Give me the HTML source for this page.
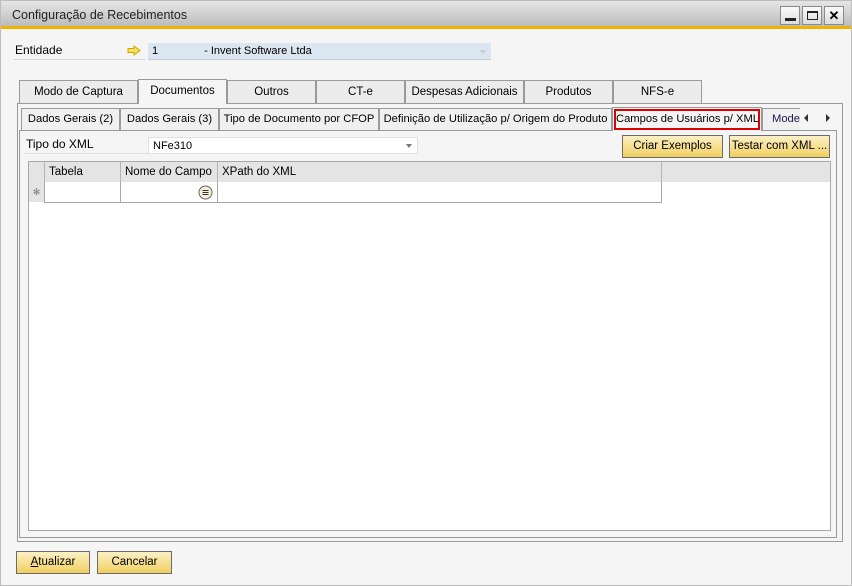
<!DOCTYPE html>
<html><head><meta charset="utf-8"><style>
*{box-sizing:border-box;margin:0;padding:0}
body{width:852px;height:586px;background:#fff;font-family:"Liberation Sans",sans-serif;font-size:12px;color:#000;position:relative;overflow:hidden;white-space:nowrap}
.a{position:absolute}
.win{left:0;top:0;width:852px;height:586px;border:1px solid #bdbdbd;background:#f5f5f5}
.title{left:1px;top:1px;width:850px;height:28px;background:linear-gradient(#e6e6e6,#bcbcbc);border-bottom:3px solid #f0b400}
.wb{top:6px;width:20px;height:19px;border:1px solid #8a8a8a;background:linear-gradient(#fafafa,#dcdcdc)}
.tab{height:23px;border:1px solid #9a9a9a;border-bottom:none;background:#ececec;text-align:center;line-height:22px;font-size:11.5px;overflow:hidden}
.itab{height:22px;border:1px solid #9a9a9a;border-bottom:none;background:#f0f0f0;text-align:center;line-height:21px;font-size:11.2px;overflow:hidden}
.btn{height:23px;border:1px solid #6b6b6b;background:linear-gradient(#fcf1c6,#f1cf60);text-align:center;line-height:21px;font-size:11.5px;overflow:hidden}
.hd{top:162px;height:20px;line-height:20px;padding-left:5px;border-right:1px solid #b5b5b5;font-size:11.5px}
</style></head><body>
<div class="a win"></div>
<div class="a title"></div>
<div class="a" style="left:12px;top:8px;font-size:12.5px;color:#222">Configuração de Recebimentos</div>
<div class="a wb" style="left:780px"><div class="a" style="left:4px;top:11px;width:11px;height:3px;background:#222"></div></div>
<div class="a wb" style="left:802px"><div class="a" style="left:4px;top:4px;width:11px;height:9px;border:1px solid #222;border-top-width:2px"></div></div>
<div class="a wb" style="left:824px;font-weight:bold;font-size:13px;text-align:center;line-height:17px">✕</div>

<div class="a" style="left:15px;top:43px;font-size:12px">Entidade</div>
<div class="a" style="left:13px;top:59px;width:132px;height:1px;background:#d8d8d8"></div>
<svg class="a" style="left:127px;top:45px" width="14" height="11"><path d="M1 3.5h6V1l6 4.5-6 4.5V7.5H1z" fill="#f5e35a" stroke="#c9a800"/></svg>
<div class="a" style="left:148px;top:43px;width:343px;height:17px;background:#dce6f1;border-bottom:1px solid #c4cfdb;font-size:11px;line-height:17px;padding-left:4px">1<span style="margin-left:46px">- Invent Software Ltda</span></div>
<div class="a" style="left:479px;top:50px;border:4px solid transparent;border-top:4px solid #c8d0d8"></div>

<div class="a" style="left:17px;top:103px;width:826px;height:439px;border:1px solid #9a9a9a;background:#f5f5f5"></div>
<div class="a tab" style="left:19px;top:80px;width:119px">Modo de Captura</div>
<div class="a tab" style="left:138px;top:79px;width:89px;height:25px;background:#f5f5f5;z-index:2">Documentos</div>
<div class="a tab" style="left:227px;top:80px;width:89px">Outros</div>
<div class="a tab" style="left:316px;top:80px;width:89px">CT-e</div>
<div class="a tab" style="left:405px;top:80px;width:119px">Despesas Adicionais</div>
<div class="a tab" style="left:524px;top:80px;width:89px">Produtos</div>
<div class="a tab" style="left:613px;top:80px;width:89px">NFS-e</div>

<div class="a" style="left:19px;top:130px;width:818px;height:408px;border:1px solid #9a9a9a;background:#f5f5f5"></div>
<div class="a itab" style="left:21px;top:108px;width:99px">Dados Gerais (2)</div>
<div class="a itab" style="left:120px;top:108px;width:99px">Dados Gerais (3)</div>
<div class="a itab" style="left:219px;top:108px;width:160px">Tipo de Documento por CFOP</div>
<div class="a itab" style="left:379px;top:108px;width:233px">Definição de Utilização p/ Origem do Produto</div>
<div class="a itab" style="left:612px;top:107px;width:150px;height:24px;background:#f5f5f5;z-index:2"><div style="margin:1px 1px 0;border:2px solid #e00000;height:21px;line-height:17px">Campos de Usuários p/ XML</div></div>
<div class="a itab" style="left:762px;top:108px;width:38px;border-right:none;text-align:left;padding-left:9px;overflow:hidden;color:#1a1a50">Model</div>
<div class="a" style="left:804px;top:114px;border:4px solid transparent;border-right:4px solid #333;border-left:none;height:8px"></div>
<div class="a" style="left:826px;top:114px;border:4px solid transparent;border-left:4px solid #333;border-right:none;height:8px"></div>

<div class="a" style="left:26px;top:137px;font-size:12px">Tipo do XML</div>
<div class="a" style="left:24px;top:153px;width:124px;height:1px;background:#e0e0e0"></div>
<div class="a" style="left:148px;top:137px;width:270px;height:17px;background:#fff;border:1px solid #e0e0e0;line-height:16px;padding-left:4px;font-size:11px">NFe310</div>
<div class="a" style="left:406px;top:144px;border:3.5px solid transparent;border-top:4px solid #777"></div>
<div class="a btn" style="left:622px;top:135px;width:101px">Criar Exemplos</div>
<div class="a btn" style="left:729px;top:135px;width:101px">Testar com XML ...</div>

<div class="a" style="left:28px;top:161px;width:803px;height:370px;border:1px solid #a8a8a8;background:#fff"></div>
<div class="a" style="left:29px;top:162px;width:801px;height:20px;background:#e4e4e4"></div>
<div class="a" style="left:29px;top:182px;width:16px;height:20px;background:#e4e4e4;border-right:1px solid #b5b5b5;font-size:9px;color:#777;text-align:center;line-height:20px">✻</div>
<div class="a hd" style="left:29px;width:16px"></div>
<div class="a hd" style="left:44px;width:77px">Tabela</div>
<div class="a hd" style="left:120px;width:98px">Nome do Campo</div>
<div class="a hd" style="left:217px;width:445px">XPath do XML</div>
<div class="a" style="left:44px;top:182px;width:618px;height:21px;border:1px solid #a8a8a8;border-top:none"></div>
<div class="a" style="left:120px;top:182px;width:1px;height:20px;background:#a8a8a8"></div>
<div class="a" style="left:217px;top:182px;width:1px;height:20px;background:#a8a8a8"></div>
<svg class="a" style="left:198px;top:185px" width="15" height="15"><circle cx="7.5" cy="7.5" r="6.5" fill="#f4f0dc" stroke="#666"/><path d="M4.5 5.5h6M4.5 7.5h6M4.5 9.5h6" stroke="#333"/></svg>

<div class="a btn" style="left:16px;top:551px;width:74px"><u>A</u>tualizar</div>
<div class="a btn" style="left:97px;top:551px;width:75px">Cancelar</div>
</body></html>
